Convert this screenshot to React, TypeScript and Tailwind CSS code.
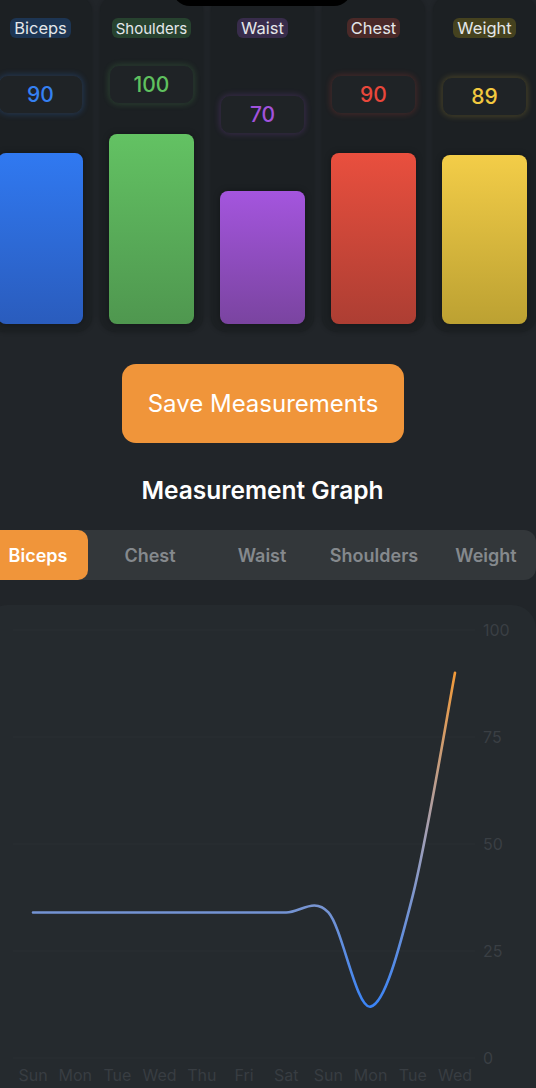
import React from "react";

const bars = [
  { name: "Biceps", value: 90, gap: 39, pill: "bg-[#1d3553]", text: "text-[#3580f2]", glow: "shadow-[0_0_6px_rgba(53,128,242,0.28)] border-[#222d3b]", bar: "from-[#3079f1] to-[#2a5cbd]", size: "text-[16.5px]" },
  { name: "Shoulders", value: 100, gap: 30, pill: "bg-[#27422f]", text: "text-[#5fc15f]", glow: "shadow-[0_0_6px_rgba(95,193,95,0.24)] border-[#23302a]", bar: "from-[#63c263] to-[#4f974f]", size: "text-[15px]" },
  { name: "Waist", value: 70, gap: 57, pill: "bg-[#382c4b]", text: "text-[#a152dc]", glow: "shadow-[0_0_6px_rgba(161,82,220,0.24)] border-[#2b2638]", bar: "from-[#a455de] to-[#7a44a0]", size: "text-[16.5px]" },
  { name: "Chest", value: 90, gap: 39, pill: "bg-[#4a2928]", text: "text-[#e9473b]", glow: "shadow-[0_0_6px_rgba(233,71,59,0.24)] border-[#332526]", bar: "from-[#e94f3e] to-[#ad3e33]", size: "text-[16.5px]" },
  { name: "Weight", value: 89, gap: 39, pill: "bg-[#45421f]", text: "text-[#f2c83f]", glow: "shadow-[0_0_6px_rgba(242,200,63,0.24)] border-[#333224]", bar: "from-[#f3cd48] to-[#bca132]", size: "text-[16.5px]" },
];

const tabs = ["Biceps", "Chest", "Waist", "Shoulders", "Weight"];
const days = ["Sun", "Mon", "Tue", "Wed", "Thu", "Fri", "Sat", "Sun", "Mon", "Tue", "Wed"];
const data = [34, 34, 34, 34, 34, 34, 34, 34, 12, 38, 90];

const X0 = 33;
const DX = 42.2;
const Y0 = 453;
const SCALE = 4.28;

function linePath() {
  const pts = data.map((v, i) => [X0 + i * DX, Y0 - v * SCALE]);
  let d = `M${pts[0][0]},${pts[0][1]}`;
  for (let i = 0; i < pts.length - 1; i++) {
    const p0 = pts[i - 1] || pts[i];
    const p1 = pts[i];
    const p2 = pts[i + 1];
    const p3 = pts[i + 2] || p2;
    const c1 = [p1[0] + (p2[0] - p0[0]) / 6, p1[1] + (p2[1] - p0[1]) / 6];
    const c2 = [p2[0] - (p3[0] - p1[0]) / 6, p2[1] - (p3[1] - p1[1]) / 6];
    d += ` C${c1[0]},${c1[1]} ${c2[0]},${c2[1]} ${p2[0]},${p2[1]}`;
  }
  return d;
}

function BarCard({ b }: { b: (typeof bars)[number] }) {
  return (
    <div className="w-[103px] shrink-0 h-[336px] -mt-1 rounded-2xl bg-[#1c2023] shadow-[0_0_4px_rgba(0,0,0,0.25)] flex flex-col items-center pt-[22px] pb-2 px-[9px]">
      <div className={`${b.pill} ${b.size} rounded-md px-1 h-[20px] flex items-center text-[#e4e7ea] leading-none`}>
        {b.name}
      </div>
      <div className="flex-1 w-full flex flex-col justify-end">
        <div
          className={`h-[39px] w-full rounded-[10px] border bg-[#1f2326] ${b.glow} flex items-center justify-center`}
          style={{ marginBottom: b.gap }}
        >
          <span className={`${b.text} text-[21px] font-medium`}>{b.value}</span>
        </div>
        <div
          className={`w-full rounded-lg bg-gradient-to-b ${b.bar} shadow-[0_0_6px_rgba(0,0,0,0.35)]`}
          style={{ height: b.value * 1.9 }}
        />
      </div>
    </div>
  );
}

export default function App() {
  return (
    <div className="relative w-[536px] h-[1088px] overflow-hidden bg-[#212529] font-['Inter','Liberation_Sans',sans-serif]">
      <div className="absolute -top-[30px] left-[172px] w-[180px] h-9 rounded-full bg-black z-10" />

      <div className="flex gap-2 -ml-[11px]">
        {bars.map((b) => (
          <BarCard key={b.name} b={b} />
        ))}
      </div>

      <div className="flex justify-center pr-[10px] mt-[32px]">
        <button className="w-[282px] h-[79px] rounded-[14px] bg-[#f0953a] text-white text-[24px]">
          Save Measurements
        </button>
      </div>

      <h2 className="mt-[32px] pr-[11px] text-center text-white text-[24.5px] font-semibold leading-[30px]">Measurement Graph</h2>

      <div className="mt-[25px] -ml-[24px] w-[560px] h-[50px] rounded-xl bg-[#33373a] grid grid-cols-5">
        {tabs.map((t, i) => (
          <div
            key={t}
            className={
              i === 0
                ? "rounded-[10px] bg-[#f0953a] flex items-center justify-center pl-3 text-white text-[18px] font-semibold"
                : "flex items-center justify-center pl-3 text-[#85898d] text-[18px] font-semibold"
            }
          >
            {t}
          </div>
        ))}
      </div>

      <div className="mt-[25px] -ml-4 w-[552px] h-[520px] rounded-3xl bg-[#252a2e]">
        <svg width="536" height="483" className="ml-4 block">
          <defs>
            <linearGradient id="lg" gradientUnits="userSpaceOnUse" x1="0" y1="402" x2="0" y2="67">
              <stop offset="0" stopColor="#3a84f7" />
              <stop offset="0.5" stopColor="#a09fb8" />
              <stop offset="1" stopColor="#f39a38" />
            </linearGradient>
          </defs>
          {[100, 75, 50, 25, 0].map((v) => {
            const y = Y0 - v * SCALE;
            return (
              <g key={v}>
                <line x1="13" x2="475" y1={y} y2={y} stroke="#2a2f33" strokeWidth="1" />
                <text x="483" y={y + 6} fill="#3a3f44" fontSize="16" fontFamily="Inter, sans-serif">
                  {v}
                </text>
              </g>
            );
          })}
          {days.map((d, i) => (
            <text key={i} x={X0 + i * DX} y="476" textAnchor="middle" fill="#383d42" fontSize="16" fontFamily="Inter, sans-serif">
              {d}
            </text>
          ))}
          <path d={linePath()} fill="none" stroke="url(#lg)" strokeWidth="2.6" strokeLinecap="round" />
        </svg>
      </div>
    </div>
  );
}
